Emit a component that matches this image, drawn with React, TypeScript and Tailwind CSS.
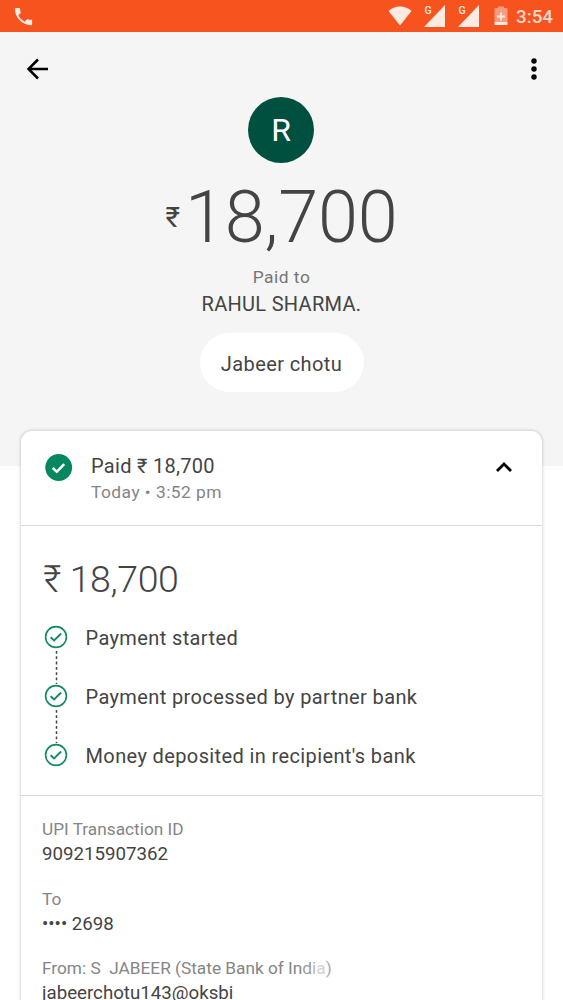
interface Detail {
    label: React.ReactNode;
    value: string;
}

const steps = ['Payment started', 'Payment processed by partner bank', "Money deposited in recipient's bank"];

const details: Detail[] = [
    { label: 'UPI Transaction ID', value: '909215907362' },
    { label: 'To', value: '•••• 2698' },
    {
        label: (
            <>
                From: S&nbsp; JABEER (State Bank of In<span className="text-[#9c9c9c]">d</span>
                <span className="text-[#b8b8b8]">i</span>
                <span className="text-[#d0d0d0]">a</span>
                <span className="text-[#a8a8a8]">)</span>
            </>
        ),
        value: 'jabeerchotu143@oksbi',
    },
];

function SignalIcon() {
    return (
        <svg width="23" height="24" viewBox="0 0 23 24" fill="#ffeae3">
            <path d="M22 1v22H1z" />
            <text x="1.5" y="10" fontSize="10.5" fontWeight="500" fontFamily="Roboto, sans-serif">
                G
            </text>
        </svg>
    );
}

function StatusBar() {
    return (
        <div className="flex h-[31.5px] items-start bg-[#f7531e]">
            <svg className="mt-[4.5px] ml-[12.2px]" width="23" height="23" viewBox="0 0 24 24" fill="#ffeae3">
                <path d="M6.62 10.79c1.44 2.83 3.76 5.14 6.59 6.59l2.2-2.2c.27-.27.67-.36 1.02-.24 1.12.37 2.33.57 3.57.57.55 0 1 .45 1 1V20c0 .55-.45 1-1 1-9.39 0-17-7.61-17-17 0-.55.45-1 1-1h3.5c.55 0 1 .45 1 1 0 1.25.2 2.45.57 3.57.11.35.03.74-.25 1.02l-2.2 2.2z" />
            </svg>
            <svg className="mt-[6px] ml-auto" width="24" height="20" viewBox="0 0 24 20" fill="#ffeae3">
                <path d="M12 19.5 .5 5C3.500 2 7.500 .5 12 .5s8.500 1.500 11.500 4.500z" />
            </svg>
            <div className="mt-[4px] ml-[11px] flex gap-[11px]">
                <SignalIcon />
                <SignalIcon />
            </div>
            <svg className="mt-[6px] ml-[14px]" width="14" height="20" viewBox="0 0 14 20">
                <path d="M4 2V.5h6V2h2.500q1 0 1 1v13H.5V3q0-1 1-1z" fill="#fb9a7c" />
                <path d="M.5 16h13v3H.5z" fill="#ffeae3" />
                <path d="M7 6.500v8M3 10.500h8" stroke="#ffeae3" strokeWidth="2" />
            </svg>
            <span className="mr-[10px] ml-[8px] text-[18.8px] leading-[34px] font-medium text-[#ffd9cc]">3:54</span>
        </div>
    );
}

function StepIcon() {
    return (
        <svg width="24" height="24" viewBox="0 0 24 24" fill="none" stroke="#128a63">
            <circle cx="12" cy="12" r="10.400" strokeWidth="1.600" />
            <path d="m6.600 12.200 3.500 3.300 7-7" strokeWidth="1.900" />
        </svg>
    );
}

export default function App() {
    return (
        <div className="h-[1000px] w-[563px] overflow-hidden bg-white font-['Roboto',sans-serif] text-[#444444]">
            <StatusBar />
            <div className="flex h-[434.5px] flex-col bg-[#f5f5f5]">
                <div className="flex h-[65px] items-start justify-between pt-[23.5px] pr-[14.5px] pl-[22px]">
                    <svg width="30" height="28" viewBox="0 0 30 28" fill="none" stroke="black" strokeWidth="2.500">
                        <path d="M26 14H6.500M16 4.500 6.500 14l9.500 9.500" />
                    </svg>
                    <svg width="30" height="28" viewBox="0 0 30 28">
                        <circle cx="15" cy="6" r="2.700" />
                        <circle cx="15" cy="14" r="2.700" />
                        <circle cx="15" cy="22" r="2.700" />
                    </svg>
                </div>
                <div className="mr-px flex size-[66px] items-center justify-center self-center rounded-full bg-[#00503f] text-[32px] leading-none text-white">
                    R
                </div>
                <div className="mt-[15px] flex h-[80px] items-center justify-center leading-none">
                    <span className="mr-[5px] text-[28px]">₹</span>
                    <span className="text-[72px] font-light tracking-[-0.2px]">18,700</span>
                </div>
                <div className="mt-[8px] text-center text-[17.4px] leading-[22px] tracking-[0.5px] text-[#757575]">Paid to</div>
                <div className="mt-[3px] text-center text-[20px] leading-[26px] tracking-[0.3px]">RAHUL SHARMA.</div>
                <div className="mt-[16px] flex h-[59px] w-[164px] items-center justify-center self-center rounded-full bg-white pt-[3px] text-[20px] tracking-[0.4px]">
                    Jabeer chotu
                </div>
            </div>
            <div className="relative mx-[21px] -mt-[35px] h-[620px] rounded-t-[11px] bg-white shadow-[0_0_3px_1px_rgba(0,0,0,0.15)]">
                <div className="flex h-[95px] items-start border-b-[1.5px] border-[#d9d9d9] pt-[23px] pr-[26px] pl-[24px]">
                    <svg width="28" height="28" viewBox="0 0 28 28">
                        <circle cx="13.700" cy="13.500" r="13.400" fill="#06875f" />
                        <path d="m7.800 14 4 3.800 7.400-7.700" fill="none" stroke="white" strokeWidth="2.500" />
                    </svg>
                    <div className="ml-[18px]">
                        <div className="text-[20px] leading-[24px] tracking-[0.3px]">Paid ₹ 18,700</div>
                        <div className="mt-[3px] text-[17.4px] leading-[22px] tracking-[0.45px] text-[#858585]">Today • 3:52 pm</div>
                    </div>
                    <svg className="mt-[5px] ml-auto" width="24" height="16" viewBox="0 0 24 16" fill="none" stroke="black" strokeWidth="2.800">
                        <path d="m5 12 7-7 7 7" />
                    </svg>
                </div>
                <div className="h-[270px] border-b-[1.5px] border-[#d9d9d9] pt-[30px] pl-[22px]">
                    <div className="text-[37.5px] leading-[46px] font-light tracking-[-0.4px]">₹ 18,700</div>
                    <div className="mt-[23px]">
                        {steps.map((step, index) => (
                            <div key={step} className="flex h-[59px]">
                                <div className="flex w-[26px] flex-col items-center">
                                    <StepIcon />
                                    {index < steps.length - 1 && (
                                        <svg width="4" height="35" viewBox="0 0 4 35">
                                            <path d="M2.500 2v33" stroke="#444" strokeWidth="1.500" strokeDasharray="2.800 2.500" />
                                        </svg>
                                    )}
                                </div>
                                <span className="ml-[16.5px] text-[20px] leading-[26px] tracking-[0.38px]">{step}</span>
                            </div>
                        ))}
                    </div>
                </div>
                <div className="flex flex-col gap-[18.5px] pt-[21px] pl-[21px]">
                    {details.map((detail) => (
                        <div key={detail.value}>
                            <div className="text-[17.25px] leading-[24px] text-[#858585]">{detail.label}</div>
                            <div className="text-[18.7px] leading-[27px]">{detail.value}</div>
                        </div>
                    ))}
                </div>
            </div>
        </div>
    );
}
